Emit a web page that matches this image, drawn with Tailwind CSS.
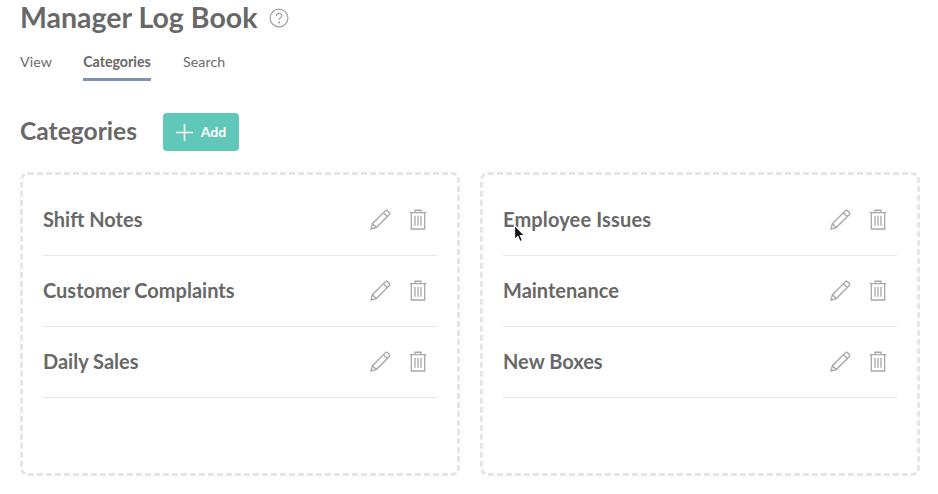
<!DOCTYPE html>
<html><head><meta charset="utf-8"><script src="https://cdn.jsdelivr.net/npm/@tailwindcss/browser@4"></script></head>
<body class="bg-white font-['Lato',sans-serif] text-[#686868] overflow-hidden">
<div class="w-[938px] h-[494px] relative px-5 overflow-hidden">
  <div class="flex items-center h-[36px] gap-[12px]">
    <h1 class="text-[28.500px] font-bold leading-[36px] -mt-[2px]">Manager Log Book</h1>
    <svg class="w-5 h-5 -mt-[1px]" viewBox="0 0 20 20" fill="none" stroke="#a3a3a3" stroke-width="1.2"><circle cx="10" cy="10" r="8.9"/><path d="M7.400 8c0-1.600 1.200-2.600 2.700-2.600s2.600 1 2.600 2.300c0 2-2.600 2-2.600 4"/><circle cx="10.100" cy="14.400" r=".5" fill="#a3a3a3"/></svg>
  </div>
  <nav class="flex gap-8 mt-[11px] h-[34px] text-[14.200px]">
    <a class="pt-[4px] text-[#6b6b6b] tracking-[0.1px]">View</a>
    <a class="pt-[4px] w-[68px] text-center font-bold border-b-[3px] border-[#7f8fb5] whitespace-nowrap -ml-[1px]">Categories</a>
    <a class="pt-[4px] text-[#6b6b6b] tracking-[0.1px]">Search</a>
  </nav>
  <div class="flex items-center gap-[26px] mt-[32px] h-[38px]">
    <h2 class="text-[24.600px] leading-[36px] font-bold -mt-[2px]">Categories</h2>
    <button class="w-[76px] h-[38px] rounded bg-[#60c8b9] text-white text-[14px] font-bold flex items-center justify-center gap-2">
      <svg class="w-[17px] h-[17px]" viewBox="0 0 17 17" stroke="#fff" stroke-width="1.6"><path d="M8.500 0v17M0 8.500h17"/></svg><span class="-mt-[2px]">Add</span>
    </button>
  </div>
  <div class="grid grid-cols-2 gap-5 mt-[21px] w-[900px]">
    <div class="h-[304px] border-[3px] border-dashed border-[#e6e6e6] rounded-lg px-5 pt-[10px]">
      <div class="h-[71px] flex items-center justify-between border-b border-[#e6e6e6] text-[20px] font-bold"><span class="-mt-[2px]">Shift Notes</span><span class="flex gap-[18px] pr-[10px] -mt-[2px]"><svg class="w-[21px] h-[21px]" viewBox="0 0 20 20" fill="none" stroke="#a8a8a8" stroke-width="1.3"><path d="M1 19l1.300-5L14.500 1.800a1.800 1.800 0 0 1 2.500 0l1.200 1.200a1.800 1.800 0 0 1 0 2.500L6 17.700zM2.300 14L6 17.700M12.800 3.500l3.700 3.700"/></svg><svg class="w-[18px] h-[21px]" preserveAspectRatio="none" viewBox="0 0 18 20" fill="none" stroke="#a8a8a8" stroke-width="1.300"><path d="M.8 3.500h16.400M6 3.500V1.200h6v2.300M2.300 3.500V19h13.400V3.500M6 6.500v9.500M9 6.500v9.500M12 6.500v9.500"/></svg></span></div>
      <div class="h-[71px] flex items-center justify-between border-b border-[#e6e6e6] text-[20px] font-bold"><span class="-mt-[2px]">Customer Complaints</span><span class="flex gap-[18px] pr-[10px] -mt-[2px]"><svg class="w-[21px] h-[21px]" viewBox="0 0 20 20" fill="none" stroke="#a8a8a8" stroke-width="1.3"><path d="M1 19l1.300-5L14.500 1.800a1.800 1.800 0 0 1 2.500 0l1.200 1.200a1.800 1.800 0 0 1 0 2.500L6 17.700zM2.300 14L6 17.700M12.800 3.500l3.700 3.700"/></svg><svg class="w-[18px] h-[21px]" preserveAspectRatio="none" viewBox="0 0 18 20" fill="none" stroke="#a8a8a8" stroke-width="1.300"><path d="M.8 3.500h16.400M6 3.500V1.200h6v2.300M2.300 3.500V19h13.400V3.500M6 6.500v9.500M9 6.500v9.500M12 6.500v9.500"/></svg></span></div>
      <div class="h-[71px] flex items-center justify-between border-b border-[#e6e6e6] text-[20px] font-bold"><span class="-mt-[2px]">Daily Sales</span><span class="flex gap-[18px] pr-[10px] -mt-[2px]"><svg class="w-[21px] h-[21px]" viewBox="0 0 20 20" fill="none" stroke="#a8a8a8" stroke-width="1.3"><path d="M1 19l1.300-5L14.500 1.800a1.800 1.800 0 0 1 2.500 0l1.200 1.200a1.800 1.800 0 0 1 0 2.500L6 17.700zM2.300 14L6 17.700M12.800 3.500l3.700 3.700"/></svg><svg class="w-[18px] h-[21px]" preserveAspectRatio="none" viewBox="0 0 18 20" fill="none" stroke="#a8a8a8" stroke-width="1.300"><path d="M.8 3.500h16.400M6 3.500V1.200h6v2.300M2.300 3.500V19h13.400V3.500M6 6.500v9.500M9 6.500v9.500M12 6.500v9.500"/></svg></span></div>
    </div>
    <div class="h-[304px] border-[3px] border-dashed border-[#e6e6e6] rounded-lg px-5 pt-[10px]">
      <div class="h-[71px] flex items-center justify-between border-b border-[#e6e6e6] text-[20px] font-bold"><span class="-mt-[2px] tracking-[0.15px]">Employee Issues</span><span class="flex gap-[18px] pr-[10px] -mt-[2px]"><svg class="w-[21px] h-[21px]" viewBox="0 0 20 20" fill="none" stroke="#a8a8a8" stroke-width="1.3"><path d="M1 19l1.300-5L14.500 1.800a1.800 1.800 0 0 1 2.500 0l1.200 1.200a1.800 1.800 0 0 1 0 2.500L6 17.700zM2.300 14L6 17.700M12.800 3.500l3.700 3.700"/></svg><svg class="w-[18px] h-[21px]" preserveAspectRatio="none" viewBox="0 0 18 20" fill="none" stroke="#a8a8a8" stroke-width="1.300"><path d="M.8 3.500h16.400M6 3.500V1.200h6v2.300M2.300 3.500V19h13.400V3.500M6 6.500v9.500M9 6.500v9.500M12 6.500v9.500"/></svg></span></div>
      <div class="h-[71px] flex items-center justify-between border-b border-[#e6e6e6] text-[20px] font-bold"><span class="-mt-[2px]">Maintenance</span><span class="flex gap-[18px] pr-[10px] -mt-[2px]"><svg class="w-[21px] h-[21px]" viewBox="0 0 20 20" fill="none" stroke="#a8a8a8" stroke-width="1.3"><path d="M1 19l1.300-5L14.500 1.800a1.800 1.800 0 0 1 2.500 0l1.200 1.200a1.800 1.800 0 0 1 0 2.500L6 17.700zM2.300 14L6 17.700M12.800 3.500l3.700 3.700"/></svg><svg class="w-[18px] h-[21px]" preserveAspectRatio="none" viewBox="0 0 18 20" fill="none" stroke="#a8a8a8" stroke-width="1.300"><path d="M.8 3.500h16.400M6 3.500V1.200h6v2.300M2.300 3.500V19h13.400V3.500M6 6.500v9.500M9 6.500v9.500M12 6.500v9.500"/></svg></span></div>
      <div class="h-[71px] flex items-center justify-between border-b border-[#e6e6e6] text-[20px] font-bold"><span class="-mt-[2px]">New Boxes</span><span class="flex gap-[18px] pr-[10px] -mt-[2px]"><svg class="w-[21px] h-[21px]" viewBox="0 0 20 20" fill="none" stroke="#a8a8a8" stroke-width="1.3"><path d="M1 19l1.300-5L14.500 1.800a1.800 1.800 0 0 1 2.500 0l1.200 1.200a1.800 1.800 0 0 1 0 2.500L6 17.700zM2.300 14L6 17.700M12.800 3.500l3.700 3.700"/></svg><svg class="w-[18px] h-[21px]" preserveAspectRatio="none" viewBox="0 0 18 20" fill="none" stroke="#a8a8a8" stroke-width="1.300"><path d="M.8 3.500h16.400M6 3.500V1.200h6v2.300M2.300 3.500V19h13.400V3.500M6 6.500v9.500M9 6.500v9.500M12 6.500v9.500"/></svg></span></div>
    </div>
  </div>
  <svg class="absolute left-[513px] top-[224px] w-[13px] h-[20px]" viewBox="0 0 12 18"><path d="M1.500 1v13l3-2.800 2 4.800 2.200-1-2-4.600h4z" fill="#111" stroke="#fff" stroke-width="1"/></svg>
</div>
</body></html>
